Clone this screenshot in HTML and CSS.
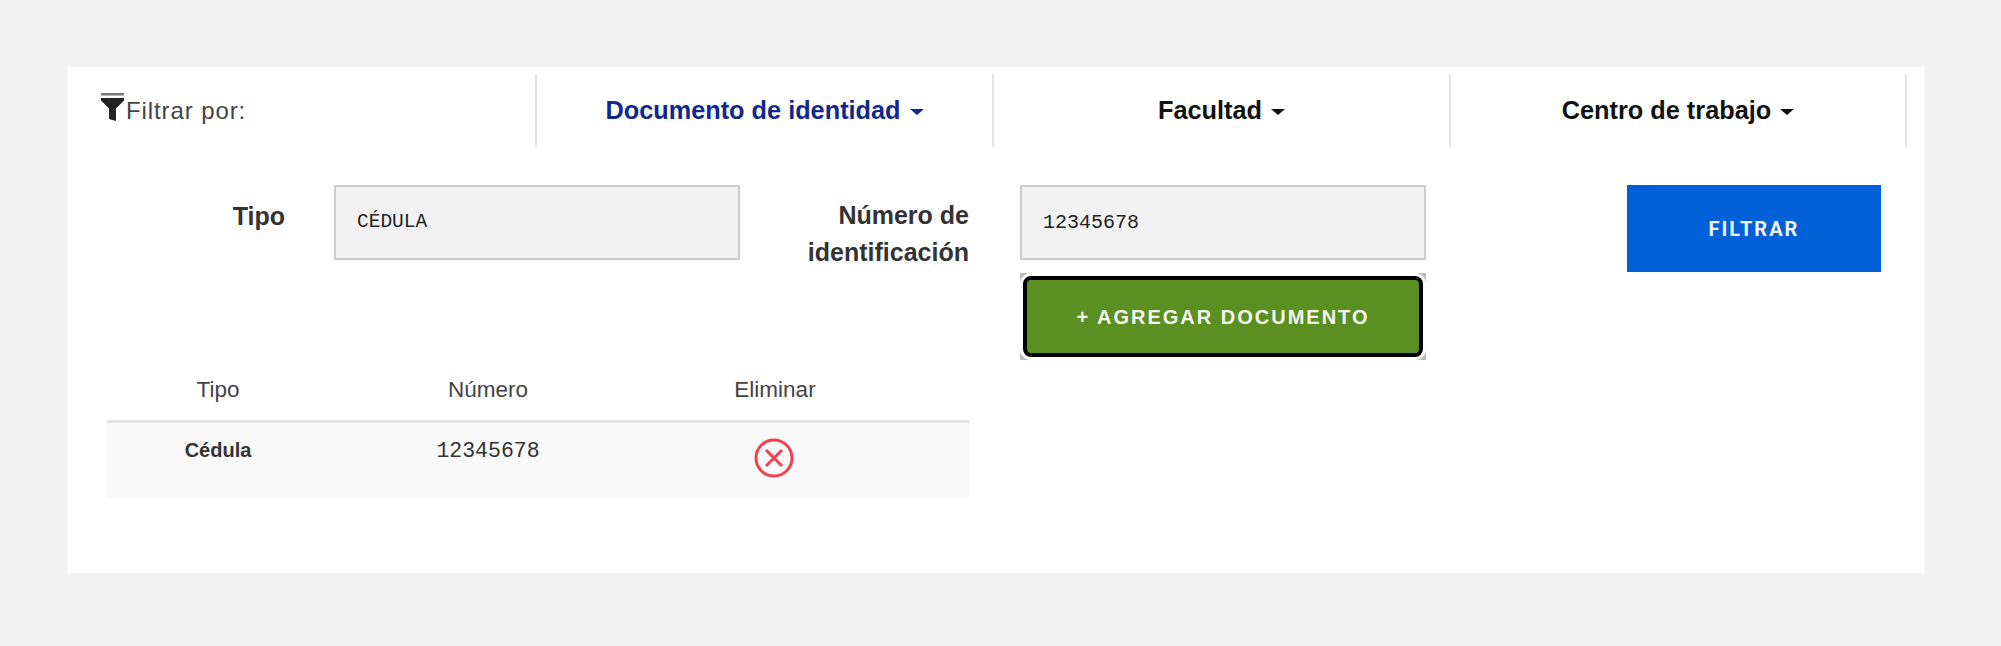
FILE: index.html
```html
<!DOCTYPE html>
<html lang="es">
<head>
    <meta charset="UTF-8">
    <title>Filtrar por documento</title>
    <link rel="stylesheet" href="styles.css">
</head>
<body>
    <div class="card">
        <div class="tabs">
            <div class="tab tab-title">
                <svg class="filter-icon" width="23" height="28" viewBox="0 0 23 28">
                    <rect width="23" height="2.5" fill="#777"/>
                    <path d="M0 5H23V7.5L15 15.5V28L8 26V15.5L0 7.5Z" fill="#222"/>
                </svg>
                <span>Filtrar por:</span>
            </div>
            <div class="tab active">Documento de identidad <i class="caret"></i></div>
            <div class="tab">Facultad <i class="caret"></i></div>
            <div class="tab tab-last">Centro de trabajo <i class="caret"></i></div>
        </div>

        <div class="filter-form">
            <label class="field-label label-tipo">Tipo</label>
            <div class="field-box">
                <div class="input input-type">CÉDULA</div>
            </div>
            <label class="field-label label-numero">Número de identificación</label>
            <div class="field-box">
                <div class="input">12345678</div>
                <div class="add-wrap">
                    <button class="add-btn">+ AGREGAR DOCUMENTO</button>
                </div>
            </div>
            <button class="filter-btn">FILTRAR</button>
        </div>

        <div class="doc-table">
            <div class="doc-row doc-head">
                <div>Tipo</div>
                <div>Número</div>
                <div>Eliminar</div>
            </div>
            <div class="doc-row doc-item">
                <div class="doc-type">Cédula</div>
                <div class="doc-number">12345678</div>
                <div>
                    <svg class="remove-icon" width="40" height="40" viewBox="0 0 40 40">
                        <circle cx="20" cy="20" r="18" fill="none" stroke="#f5404f" stroke-width="3"/>
                        <path d="M12 12L28 28M28 12L12 28" fill="none" stroke="#f5404f" stroke-width="3"/>
                    </svg>
                </div>
            </div>
        </div>
    </div>
</body>
</html>
```

FILE: styles.css
```css
html {
    background-color: #f2f2f2;
}
body {
    margin: 0;
    padding: 67px 76px 0 67px;
    font-family: "Liberation Sans", Arial, sans-serif;
    color: #222;
}
.card {
    background-color: white;
    padding: 7px 18px 75px 0;
    box-shadow: 0 2px 1px #e6e6e6;
}
.tabs {
    display: flex;
    height: 73px;
}
.tab {
    flex: 0 0 457px;
    box-sizing: border-box;
    display: flex;
    align-items: center;
    justify-content: center;
    gap: 9px;
    border-right: 2px solid #e4e4e4;
    font-size: 25.3px;
    font-weight: bold;
    color: #111;
}
.tab-last {
    flex-basis: 456px;
}
.tab-title {
    flex: 0 0 470px;
    justify-content: flex-start;
    align-items: flex-start;
    gap: 2px;
    padding: 19px 0 0 34px;
    font-weight: normal;
    font-size: 24px;
    letter-spacing: 0.9px;
    color: #444;
}
.tab-title span {
    line-height: 30px;
    margin-top: 3px;
}
.tab.active {
    color: #12288a;
}
.caret {
    width: 0;
    height: 0;
    margin-top: 3px;
    border-left: 7px solid transparent;
    border-right: 7px solid transparent;
    border-top: 6px solid currentColor;
}
.filter-form {
    display: flex;
    align-items: flex-start;
    margin-top: 38px;
}
.field-label {
    box-sizing: border-box;
    text-align: right;
    font-size: 25px;
    font-weight: bold;
    line-height: 37px;
    color: #333;
}
.label-tipo {
    width: 218px;
    margin-right: 49px;
    line-height: 62px;
}
.label-numero {
    width: 229px;
    margin-right: 51px;
    padding-left: 50px;
    margin-top: 12px;
}
.field-box {
    width: 406px;
}
.input {
    box-sizing: border-box;
    height: 75px;
    display: flex;
    align-items: center;
    padding: 0 0 0 21px;
    background-color: #f2f2f2;
    border: 2px solid #ccc;
    font-family: "Liberation Mono", monospace;
    font-size: 20px;
    color: #222;
}
.input-type {
    padding-bottom: 2px;
    font-size: 19.5px;
}
.add-wrap {
    margin-top: 13px;
    padding: 3px;
    height: 87px;
    box-sizing: border-box;
    background: #bbb;
}
.add-btn {
    display: block;
    width: 100%;
    height: 100%;
    box-sizing: border-box;
    padding-top: 2px;
    background-color: #5a8f22;
    border: 4px solid #000;
    border-radius: 8px;
    box-shadow: 0 0 0 3px white;
    font-family: inherit;
    font-size: 20px;
    font-weight: bold;
    letter-spacing: 2px;
    color: #f6f6ec;
}
.filter-btn {
    width: 254px;
    height: 87px;
    margin-left: 201px;
    padding-top: 2px;
    background-color: #0060d8;
    border: none;
    font-family: Roboto, sans-serif;
    font-size: 20px;
    font-weight: bold;
    letter-spacing: 2px;
    color: #f0f4ff;
}
.doc-table {
    width: 862px;
    margin: 0 0 0 40px;
}
.doc-row {
    display: grid;
    grid-template-columns: 222px 318px 256px 1fr;
    text-align: center;
}
.doc-head {
    height: 63px;
    box-sizing: border-box;
    padding-top: 17px;
    border-bottom: 3px solid #e2e2e2;
    font-size: 22.5px;
    color: #444;
}
.doc-item {
    height: 75px;
    padding-top: 16px;
    box-sizing: border-box;
    background-color: #f9f9f9;
}
.doc-type {
    font-size: 20px;
    font-weight: bold;
    color: #333;
}
.doc-number {
    font-family: "Liberation Mono", monospace;
    font-size: 21.5px;
    color: #333;
}
.remove-icon {
    margin: -1px 2px 0 0;
}
```
